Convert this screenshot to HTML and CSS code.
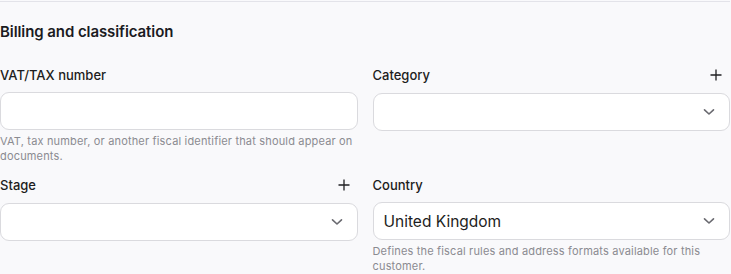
FILE: index.html
```html
<!DOCTYPE html>
<html lang="en">
<head>
<meta charset="utf-8">
<title>Billing and classification</title>
<link rel="stylesheet" href="styles.css">
</head>
<body>
<section class="section">
  <h2 class="section-title">Billing and classification</h2>
  <div class="grid">
    <div class="field">
      <div class="label-row"><label class="label">VAT/TAX number</label></div>
      <div class="control"></div>
      <p class="help">VAT, tax number, or another fiscal identifier that should appear on documents.</p>
    </div>
    <div class="field">
      <div class="label-row has-action">
        <label class="label">Category</label>
        <svg class="plus" viewBox="0 0 12 12" width="12" height="12"><path d="M6 0.5V11.5M0.5 6H11.5" stroke="#1f1f23" stroke-width="1.3" fill="none"/></svg>
      </div>
      <div class="control select">
        <span class="value"></span>
        <svg class="chev" viewBox="0 0 12 8" width="12" height="8"><path d="M1.5 1.8L6 6L10.5 1.8" stroke="#6a6a70" stroke-width="1.6" fill="none" stroke-linecap="round" stroke-linejoin="round"/></svg>
      </div>
    </div>
    <div class="field">
      <div class="label-row has-action">
        <label class="label">Stage</label>
        <svg class="plus" viewBox="0 0 12 12" width="12" height="12"><path d="M6 0.5V11.5M0.5 6H11.5" stroke="#1f1f23" stroke-width="1.3" fill="none"/></svg>
      </div>
      <div class="control select">
        <span class="value"></span>
        <svg class="chev" viewBox="0 0 12 8" width="12" height="8"><path d="M1.5 1.8L6 6L10.5 1.8" stroke="#6a6a70" stroke-width="1.6" fill="none" stroke-linecap="round" stroke-linejoin="round"/></svg>
      </div>
    </div>
    <div class="field">
      <div class="label-row"><label class="label">Country</label></div>
      <div class="control select">
        <span class="value">United Kingdom</span>
        <svg class="chev" viewBox="0 0 12 8" width="12" height="8"><path d="M1.5 1.8L6 6L10.5 1.8" stroke="#6a6a70" stroke-width="1.6" fill="none" stroke-linecap="round" stroke-linejoin="round"/></svg>
      </div>
      <p class="help">Defines the fiscal rules and address formats available for this customer.</p>
    </div>
  </div>
</section>
</body>
</html>
```

FILE: styles.css
```css
html, body {
  margin: 0;
  padding: 0;
  background: #f9f9fb;
}
body {
  font-family: Inter, "Open Sans", "Liberation Sans", sans-serif;
  color: #1d1d21;
  padding-top: 1px;
}
.section {
  width: 730px;
  border-top: 1px solid #e3e3e9;
}
.section-title {
  margin: 20px 0 0;
  font-size: 15px;
  line-height: 20px;
  font-weight: 600;
  letter-spacing: -0.08px;
  color: #1b1b1f;
}
.grid {
  display: grid;
  grid-template-columns: 1fr 1fr;
  column-gap: 15px;
  row-gap: 11px;
  margin-top: 23px;
  align-items: start;
}
.label-row {
  display: flex;
  align-items: center;
  justify-content: space-between;
  height: 19px;
  margin-bottom: 8px;
}
.label-row.has-action {
  height: 20px;
}
.label {
  font-size: 13px;
  font-weight: 500;
  color: #1d1d21;
}
.plus {
  margin-right: 8px;
  display: block;
}
.control {
  box-sizing: border-box;
  height: 38px;
  background: #ffffff;
  border: 1px solid #dadade;
  border-radius: 9px;
}
.select {
  display: flex;
  align-items: center;
  justify-content: space-between;
  padding: 0 14px 0 10px;
}
.value {
  font-size: 15.5px;
  color: #1d1d21;
}
.chev {
  display: block;
}
.help {
  margin: 4px 0 0;
  font-size: 11px;
  line-height: 15px;
  letter-spacing: 0.17px;
  color: #8b8b91;
}
```
